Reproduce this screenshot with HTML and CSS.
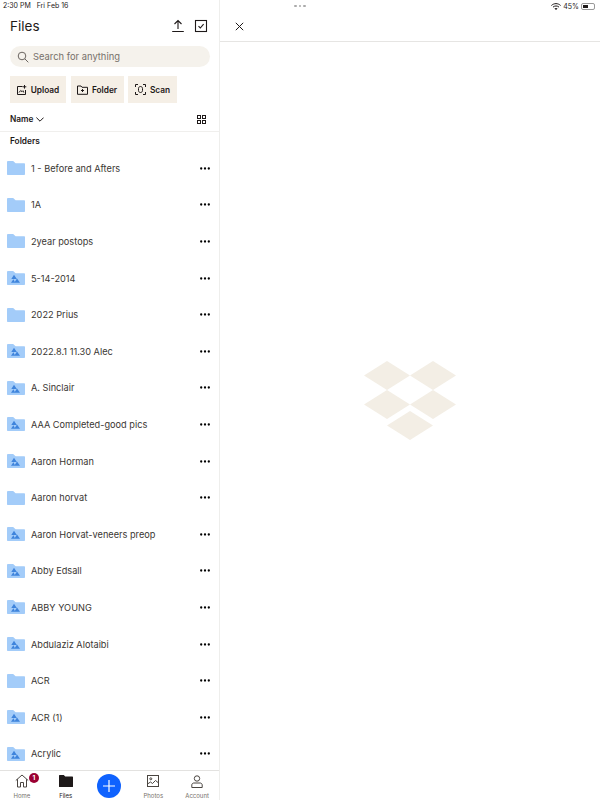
FILE: index.html
```html
<html>
<head>
    <title>Files</title>
    <link rel="stylesheet" href="styles.css">
</head>
<body>
    <svg class="defs" width="0" height="0">
        <symbol id="folder" viewBox="0 0 18 14">
            <path d="M0 1C0 .5.5 0 1 0h4.700c.4 0 .7.1 1 .4L8.600 2.200H17c.6 0 1 .4 1 1V13c0 .6-.4 1-1 1H1c-.6 0-1-.4-1-1z" fill="#a3ccf9"/>
        </symbol>
        <symbol id="shared" viewBox="0 0 18 14">
            <path d="M0 1C0 .5.5 0 1 0h4.700c.4 0 .7.1 1 .4L8.600 2.200H17c.6 0 1 .4 1 1V13c0 .6-.4 1-1 1H1c-.6 0-1-.4-1-1z" fill="#a3ccf9"/>
            <path d="M7 3.800L9.800 8H4.300zM10 7.500l3 4.200H7.200zM6.400 8.200L8.200 11.700H4z" fill="#3f84dc"/>
        </symbol>
        <symbol id="more" viewBox="0 0 10 3">
            <circle cx="1.200" cy="1.500" r="1.150"/>
            <circle cx="5" cy="1.500" r="1.150"/>
            <circle cx="8.800" cy="1.500" r="1.150"/>
        </symbol>
    </svg>

    <div class="app">
        <div class="sidebar">
            <div class="status-left">2:30 PM&nbsp;&nbsp;&nbsp;Fri Feb 16</div>

            <div class="title-row">
                <h1>Files</h1>
                <div class="title-icons">
                    <svg width="14" height="14" viewBox="0 0 14 14" fill="none" stroke="#1e1919" stroke-width="1.100">
                        <path d="M7 10V1.500M3.500 5L7 1.500 10.500 5M1.200 12.500h11.600"/>
                    </svg>
                    <svg width="14" height="14" viewBox="0 0 14 14" fill="none" stroke="#1e1919" stroke-width="1.100">
                        <rect x="1.500" y="1.500" width="11" height="11"/>
                        <path d="M4.500 7.200l1.800 1.800 3.300-3.800"/>
                    </svg>
                </div>
            </div>

            <div class="search">
                <svg width="12" height="12" viewBox="0 0 12 12" fill="none" stroke="#6b6560" stroke-width="1">
                    <circle cx="5" cy="5" r="3.800"/>
                    <path d="M7.800 7.800l3.500 3.500"/>
                </svg>
                <span>Search for anything</span>
            </div>

            <div class="actions">
                <div class="btn btn-upload">
                    <svg width="10" height="10" viewBox="0 0 10 10" fill="none" stroke="#1e1919" stroke-width="1">
                        <path d="M5.500 1.500H.5v8h8V5M7.500 0v3.600M5.700 1.800h3.600M2 7.500l1.700-2 1.300 1.200 1-1 .8 1.800"/>
                    </svg>
                    Upload
                </div>
                <div class="btn btn-folder">
                    <svg width="11" height="10" viewBox="0 0 11 10" fill="none" stroke="#1e1919" stroke-width="1">
                        <path d="M.5 1h3.500l1 1.300h5.500v7H.5zM5.500 4v3M4 5.500h3"/>
                    </svg>
                    Folder
                </div>
                <div class="btn btn-scan">
                    <svg width="11" height="11" viewBox="0 0 11 11" fill="none" stroke="#1e1919" stroke-width="1">
                        <path d="M.5 3V.5H3M8 .5h2.500V3M.5 8v2.500H3M8 10.500h2.500V8"/>
                        <path d="M5.500 2.500c1.200 0 2 .8 2 2v2c0 1.200-.8 2-2 2s-2-.8-2-2v-2c0-1.200.8-2 2-2z"/>
                    </svg>
                    Scan
                </div>
            </div>

            <div class="sort-row">
                <div class="sort-name">
                    Name
                    <svg width="8" height="5" viewBox="0 0 8 5" fill="none" stroke="#1e1919" stroke-width="1">
                        <path d="M.4 .6L4 4.200 7.600 .6"/>
                    </svg>
                </div>
                <svg width="9" height="9" viewBox="0 0 9 9" fill="none" stroke="#1e1919" stroke-width="1">
                    <rect x=".5" y=".5" width="3" height="3"/>
                    <rect x="5.500" y=".5" width="3" height="3"/>
                    <rect x=".5" y="5.500" width="3" height="3"/>
                    <rect x="5.500" y="5.500" width="3" height="3"/>
                </svg>
            </div>

            <div class="section-label">Folders</div>

            <div class="list">
                <div class="row"><svg class="ficon"><use href="#folder"/></svg><span class="fname">1 - Before and Afters</span><svg class="more"><use href="#more"/></svg></div>
                <div class="row"><svg class="ficon"><use href="#folder"/></svg><span class="fname">1A</span><svg class="more"><use href="#more"/></svg></div>
                <div class="row"><svg class="ficon"><use href="#folder"/></svg><span class="fname">2year postops</span><svg class="more"><use href="#more"/></svg></div>
                <div class="row"><svg class="ficon"><use href="#shared"/></svg><span class="fname">5-14-2014</span><svg class="more"><use href="#more"/></svg></div>
                <div class="row"><svg class="ficon"><use href="#folder"/></svg><span class="fname">2022 Prius</span><svg class="more"><use href="#more"/></svg></div>
                <div class="row"><svg class="ficon"><use href="#shared"/></svg><span class="fname">2022.8.1 11.30 Alec</span><svg class="more"><use href="#more"/></svg></div>
                <div class="row"><svg class="ficon"><use href="#shared"/></svg><span class="fname">A. Sinclair</span><svg class="more"><use href="#more"/></svg></div>
                <div class="row"><svg class="ficon"><use href="#shared"/></svg><span class="fname">AAA Completed-good pics</span><svg class="more"><use href="#more"/></svg></div>
                <div class="row"><svg class="ficon"><use href="#shared"/></svg><span class="fname">Aaron Horman</span><svg class="more"><use href="#more"/></svg></div>
                <div class="row"><svg class="ficon"><use href="#folder"/></svg><span class="fname">Aaron horvat</span><svg class="more"><use href="#more"/></svg></div>
                <div class="row"><svg class="ficon"><use href="#shared"/></svg><span class="fname">Aaron Horvat-veneers preop</span><svg class="more"><use href="#more"/></svg></div>
                <div class="row"><svg class="ficon"><use href="#shared"/></svg><span class="fname">Abby Edsall</span><svg class="more"><use href="#more"/></svg></div>
                <div class="row"><svg class="ficon"><use href="#shared"/></svg><span class="fname">ABBY YOUNG</span><svg class="more"><use href="#more"/></svg></div>
                <div class="row"><svg class="ficon"><use href="#shared"/></svg><span class="fname">Abdulaziz Alotaibi</span><svg class="more"><use href="#more"/></svg></div>
                <div class="row"><svg class="ficon"><use href="#folder"/></svg><span class="fname">ACR</span><svg class="more"><use href="#more"/></svg></div>
                <div class="row"><svg class="ficon"><use href="#shared"/></svg><span class="fname">ACR (1)</span><svg class="more"><use href="#more"/></svg></div>
                <div class="row"><svg class="ficon"><use href="#shared"/></svg><span class="fname">Acrylic</span><svg class="more"><use href="#more"/></svg></div>
            </div>

            <div class="tabbar">
                <div class="tab">
                    <div class="tab-icon">
                        <svg width="14" height="14" viewBox="0 0 14 14" fill="none" stroke="#4a4540" stroke-width="1">
                            <path d="M.8 6.500L7 1l6.200 5.500M2.500 5.200V13h3V8.500h3V13h3V5.200"/>
                        </svg>
                        <span class="badge">1</span>
                    </div>
                    <span>Home</span>
                </div>
                <div class="tab tab-active">
                    <div class="tab-icon">
                        <svg width="14" height="12" viewBox="0 0 14 12">
                            <path d="M0 .6C0 .3.3 0 .6 0h4.200l1.400 1.500h7.200c.3 0 .6.300.6.600v9.300c0 .3-.3.6-.6.6H.6c-.3 0-.6-.3-.6-.6z" fill="#1e1919"/>
                        </svg>
                    </div>
                    <span>Files</span>
                </div>
                <div class="tab">
                    <div class="add">
                        <svg width="12" height="12" viewBox="0 0 12 12" fill="none" stroke="#fff" stroke-width="1.200">
                            <path d="M6 0v12M0 6h12"/>
                        </svg>
                    </div>
                </div>
                <div class="tab">
                    <div class="tab-icon">
                        <svg width="12" height="12" viewBox="0 0 12 12" fill="none" stroke="#4a4540" stroke-width="1">
                            <rect x=".5" y=".5" width="11" height="11"/>
                            <circle cx="3.800" cy="3.800" r="1"/>
                            <path d="M.5 9l3-2 2 1.500 3-3 2.500 2"/>
                        </svg>
                    </div>
                    <span>Photos</span>
                </div>
                <div class="tab">
                    <div class="tab-icon">
                        <svg width="12" height="13" viewBox="0 0 12 13" fill="none" stroke="#4a4540" stroke-width="1">
                            <circle cx="6" cy="3.500" r="2.700"/>
                            <path d="M.8 12.500V10c0-1.200 1-2 2-2h6.400c1 0 2 .8 2 2v2.500z"/>
                        </svg>
                    </div>
                    <span>Account</span>
                </div>
            </div>
        </div>

        <div class="main">
            <div class="status-right">
                <div class="dots"><i></i><i></i><i></i></div>
                <div class="status-info">
                    <svg width="10" height="7" viewBox="0 0 10 7" fill="none" stroke="#1e1919" stroke-width="1">
                        <path d="M.4 2.500C3 0 7 0 9.600 2.500M2 4.100c1.700-1.500 4.300-1.500 6 0"/>
                        <path d="M5 7L3.400 5.400c.9-.7 2.300-.7 3.200 0z" fill="#1e1919" stroke="none"/>
                    </svg>
                    45%
                    <div class="battery"><div class="battery-level"></div></div>
                </div>
            </div>
            <div class="main-head">
                <svg width="9" height="9" viewBox="0 0 9 9" fill="none" stroke="#1e1919" stroke-width="1">
                    <path d="M.8 .8l7.400 7.400M8.200 .8L.8 8.200"/>
                </svg>
            </div>
            <div class="preview">
                <svg width="92" height="79" viewBox="0 0 92 79">
                    <path d="M23 0l23 14.500L23 29 0 14.500zM69 0l23 14.500L69 29 46 14.500zM23 29l23 14.500L23 58 0 43.500zM69 29l23 14.500L69 58 46 43.500zM46 50l23 14.500L46 79 23 64.500z" fill="#f3eee5"/>
                </svg>
            </div>
        </div>
    </div>
</body>
</html>
```

FILE: styles.css
```css
html, body {
    margin: 0;
    height: 100%;
    overflow: hidden;
}
body {
    font-family: Inter, "Liberation Sans", sans-serif;
    color: #1e1919;
    background-color: #fff;
}
.defs {
    position: absolute;
}
.app {
    display: flex;
    height: 800px;
}

/* left pane */
.sidebar {
    width: 219px;
    flex-shrink: 0;
    display: flex;
    flex-direction: column;
    border-right: 1px solid #eeeeec;
    overflow: hidden;
}
.status-left {
    height: 12px;
    padding-left: 3px;
    font-size: 7px;
    line-height: 12px;
}
.title-row {
    display: flex;
    justify-content: space-between;
    align-items: center;
    height: 28px;
    padding: 0 11px 0 10px;
}
h1 {
    margin: 0;
    font-size: 13.500px;
    font-weight: 400;
}
.title-icons {
    display: flex;
    gap: 9.500px;
}
.search {
    display: flex;
    align-items: center;
    gap: 4px;
    height: 21px;
    margin: 6px 9px 0 10px;
    padding-left: 7px;
    font-size: 9.400px;
    color: #77716b;
    background-color: #f5f2ec;
    border-radius: 11px;
}
.actions {
    display: flex;
    gap: 4.500px;
    margin: 9px 0 0 10px;
}
.btn {
    display: flex;
    align-items: center;
    justify-content: center;
    gap: 4px;
    height: 27px;
    font-size: 8.300px;
    font-weight: 600;
    background-color: #f5efe6;
}
.btn-upload {
    width: 56px;
}
.btn-folder {
    width: 53px;
}
.btn-scan {
    width: 49px;
}
.sort-row {
    display: flex;
    justify-content: space-between;
    align-items: center;
    box-sizing: border-box;
    height: 29px;
    padding: 4px 13px 0 10px;
    border-bottom: 1px solid #f0efed;
}
.sort-name {
    display: flex;
    align-items: center;
    gap: 3px;
    font-size: 8.300px;
    font-weight: 600;
}
.section-label {
    height: 18px;
    padding-left: 10px;
    font-size: 8.300px;
    font-weight: 600;
    line-height: 18px;
}
.list {
    flex: 1;
    overflow: hidden;
}
.row {
    display: flex;
    align-items: center;
    height: 36.600px;
    padding: 0 9.500px 0 7px;
}
.ficon {
    width: 18px;
    height: 14px;
    flex-shrink: 0;
}
.fname {
    flex: 1;
    margin-left: 6px;
    font-size: 9.200px;
    color: #3a3632;
}
.more {
    width: 10px;
    height: 3px;
}

/* bottom tabs */
.tabbar {
    display: flex;
    box-sizing: border-box;
    height: 30px;
    padding-top: 3px;
    border-top: 1px solid #e3e2e0;
    background-color: #fff;
}
.tab {
    flex: 1;
    display: flex;
    flex-direction: column;
    align-items: center;
    font-size: 6px;
    color: #77716b;
}
.tab-active {
    color: #1e1919;
}
.tab-icon {
    position: relative;
    display: flex;
    align-items: center;
    height: 14px;
    margin-bottom: 4px;
}
.badge {
    position: absolute;
    top: -1px;
    left: 14px;
    width: 10px;
    height: 10px;
    font-size: 6.500px;
    font-weight: 700;
    line-height: 10px;
    text-align: center;
    color: #fff;
    background-color: #9b0032;
    border-radius: 50%;
}
.add {
    display: flex;
    align-items: center;
    justify-content: center;
    width: 24px;
    height: 24px;
    background-color: #0f62fe;
    border-radius: 50%;
}

/* right pane */
.main {
    flex: 1;
    display: flex;
    flex-direction: column;
}
.status-right {
    display: flex;
    justify-content: space-between;
    align-items: center;
    height: 12px;
    padding: 0 5px 0 74px;
    font-size: 7px;
}
.dots {
    display: flex;
    gap: 2px;
}
.dots i {
    width: 2.500px;
    height: 2.500px;
    background-color: #aaa;
    border-radius: 50%;
}
.status-info {
    display: flex;
    align-items: center;
    gap: 2px;
}
.battery {
    width: 14px;
    height: 7px;
    padding: 1px;
    border: 1px solid #999;
    border-radius: 2px;
    box-sizing: border-box;
}
.battery-level {
    width: 50%;
    height: 100%;
    background-color: #1e1919;
}
.main-head {
    display: flex;
    align-items: center;
    height: 29px;
    padding-left: 15px;
    border-bottom: 1px solid #e6e5e3;
}
.preview {
    flex: 1;
    display: flex;
    align-items: center;
    justify-content: center;
    padding-bottom: 42px;
}
```
